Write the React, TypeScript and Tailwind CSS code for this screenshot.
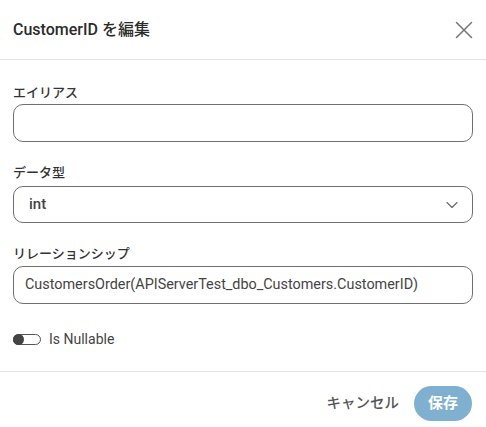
import { X, ChevronDown } from "lucide-react";

const font = { fontFamily: "Roboto, 'Noto Sans CJK JP', sans-serif" };

function Label({ children }: { children: React.ReactNode }) {
  return <div className="h-[20px] text-[13px] leading-[20px] font-medium text-[#333]">{children}</div>;
}

export default function App() {
  return (
    <div style={font} className="w-[486px] h-[427px] bg-white text-[#333] flex flex-col">
      <div className="h-[60px] shrink-0 border-b border-[#e4e4e4] pl-[13px] pr-[7px] flex items-center justify-between">
        <h2 className="text-[16px] font-medium text-[#2b2b2b]">CustomerID を編集</h2>
        <X className="w-[30px] h-[30px] text-[#777]" strokeWidth={1.2} />
      </div>

      <div className="px-[13px] pt-[23px] flex flex-col">
        <Label>エイリアス</Label>
        <div className="mt-[1px] h-[38px] rounded-[10px] border border-[#707070]" />

        <div className="mt-[21px]">
          <Label>データ型</Label>
        </div>
        <div className="mt-[3px] h-[37px] rounded-[10px] border border-[#707070] flex items-center justify-between pl-[15px] pr-[10px]">
          <span className="text-[15px] font-medium text-[#444]">int</span>
          <ChevronDown className="w-[20px] h-[20px] text-[#666]" strokeWidth={1.3} />
        </div>

        <div className="mt-[21px]">
          <Label>リレーションシップ</Label>
        </div>
        <div className="mt-[2px] h-[38px] rounded-[10px] border border-[#707070] flex items-center pl-[11px]">
          <span className="text-[14.4px] text-[#444]">CustomersOrder(APIServerTest_dbo_Customers.CustomerID)</span>
        </div>

        <div className="mt-[25px] flex items-center gap-[8px] h-[20px]">
          <div className="relative w-[28px] h-[11px] rounded-full border border-[#555]">
            <div className="absolute left-[-1px] top-[-1px] w-[11px] h-[11px] rounded-full bg-[#444]" />
          </div>
          <span className="text-[14px] text-[#444]">Is Nullable</span>
        </div>
      </div>

      <div className="mt-[22px] border-t border-[#e4e4e4] flex items-center justify-end gap-[15px] pr-[14px] pt-[14px]">
        <span className="text-[14.5px] font-medium text-[#555]">キャンセル</span>
        <button className="h-[35px] w-[58px] rounded-full bg-[#7fb0cf] text-white text-[15px] font-bold">保存</button>
      </div>
    </div>
  );
}
